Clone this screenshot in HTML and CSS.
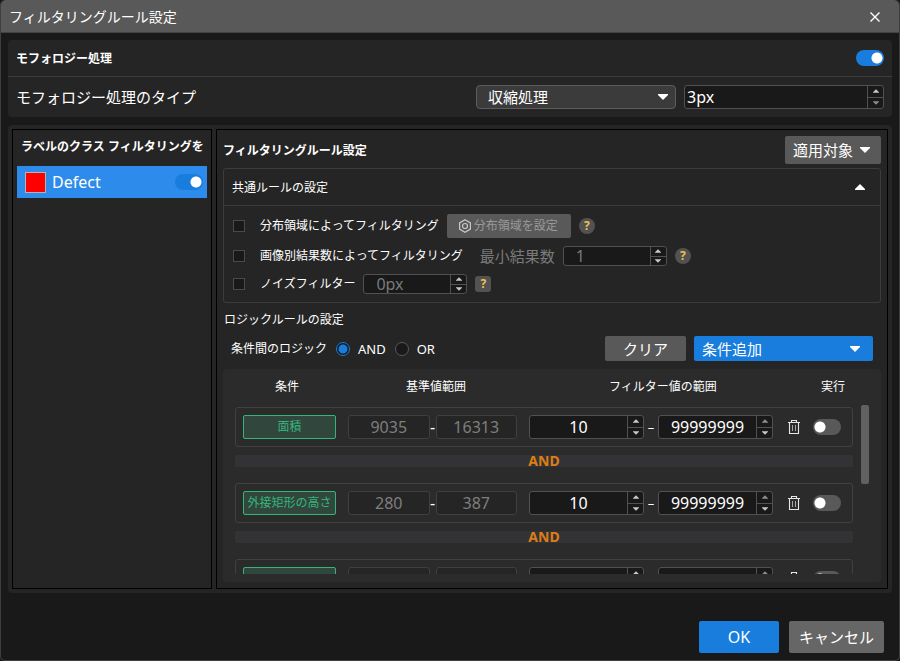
FILE: index.html
```html
<!DOCTYPE html>
<html lang="ja">
<head>
<meta charset="utf-8">
<meta name="viewport" content="width=device-width, initial-scale=1">
<title>フィルタリングルール設定</title>
<link rel="stylesheet" href="styles.css">
</head>
<body>
<svg class="sprite" aria-hidden="true">
  <symbol id="trash" viewBox="0 0 14 16">
    <path d="M1 3.500h12M4.500 3V1.500h5V3M2.500 4v10.500h9V4" fill="none" stroke="#e6e6e6" stroke-width="1.100"/>
    <path d="M5.500 6v6M8.500 6v6" stroke="#a8a8a8"/>
  </symbol>
  <symbol id="up" viewBox="0 0 10 6"><path d="M5 0l5 5v1H0V5z"/></symbol>
  <symbol id="down" viewBox="0 0 10 6"><path d="M0 0h10v1L5 6 0 1z"/></symbol>
</svg>
<main class="dialog">
  <header class="titlebar">
    <h1>フィルタリングルール設定</h1>
    <button class="close" aria-label="閉じる"><svg viewBox="0 0 10 10"><path d="M.5.5l9 9M9.500.5l-9 9"/></svg></button>
  </header>

  <section class="card morphology">
    <div class="morph-head">
      <label for="morph">モフォロジー処理</label>
      <input class="switch" id="morph" type="checkbox" role="switch" checked>
    </div>
    <div class="morph-body">
      <label for="type">モフォロジー処理のタイプ</label>
      <div class="select">
        <select id="type"><option>収縮処理</option></select>
        <svg class="caret"><use href="#down"/></svg>
      </div>
      <div class="spin morph-size dim-down">
        <input type="text" value="3px" aria-label="サイズ">
        <div class="steps"><button aria-label="増やす"><svg><use href="#up"/></svg></button><button aria-label="減らす"><svg><use href="#down"/></svg></button></div>
      </div>
    </div>
  </section>

  <section class="card workspace">
    <aside class="pane classes">
      <h2>ラベルのクラス フィルタリングを</h2>
      <div class="class-row">
        <span class="swatch"></span>
        <label for="defect">Defect</label>
        <input class="switch" id="defect" type="checkbox" role="switch" checked>
      </div>
    </aside>

    <div class="pane rules">
      <div class="rules-head">
        <h2>フィルタリングルール設定</h2>
        <button class="btn apply">適用対象 <svg class="caret"><use href="#down"/></svg></button>
      </div>

      <section class="common">
        <div class="common-head">
          <h3>共通ルールの設定</h3>
          <button class="fold" aria-label="折りたたむ"><svg class="caret"><use href="#up"/></svg></button>
        </div>
        <div class="common-body">
          <div class="option">
            <input class="check" id="region" type="checkbox"><label for="region">分布領域によってフィルタリング</label>
            <button class="btn region" disabled>
              <svg viewBox="0 0 14 14"><path d="M7 .8l5.400 3.100v6.200L7 13.200l-5.400-3.100V3.900z"/><circle cx="7" cy="7" r="2.500"/></svg>分布領域を設定</button>
            <button class="help" aria-label="ヘルプ">?</button>
          </div>
          <div class="option">
            <input class="check" id="count" type="checkbox"><label for="count">画像別結果数によってフィルタリング</label>
            <label class="min" for="min">最小結果数</label>
            <div class="spin small">
              <input id="min" type="text" value="1" disabled>
              <div class="steps"><button aria-label="増やす"><svg><use href="#up"/></svg></button><button aria-label="減らす"><svg><use href="#down"/></svg></button></div>
            </div>
            <button class="help" aria-label="ヘルプ">?</button>
          </div>
          <div class="option compact">
            <input class="check" id="noise" type="checkbox"><label for="noise">ノイズフィルター</label>
            <div class="spin small">
              <input type="text" value="0px" aria-label="ノイズサイズ" disabled>
              <div class="steps"><button aria-label="増やす"><svg><use href="#up"/></svg></button><button aria-label="減らす"><svg><use href="#down"/></svg></button></div>
            </div>
            <button class="help square" aria-label="ヘルプ">?</button>
          </div>
        </div>
      </section>

      <h3 class="logic-title">ロジックルールの設定</h3>
      <div class="logic">
        <span class="logic-label">条件間のロジック</span>
        <input type="radio" name="logic" id="and" checked><label for="and">AND</label>
        <input type="radio" name="logic" id="or"><label for="or">OR</label>
        <button class="btn clear">クリア</button>
        <button class="btn primary add">条件追加 <svg class="caret"><use href="#down"/></svg></button>
      </div>

      <section class="conditions">
        <div class="columns"><span>条件</span><span>基準値範囲</span><span>フィルター値の範囲</span><span>実行</span></div>
        <div class="viewport">
          <div class="list">
            <div class="condition">
              <button class="chip">面積</button>
              <div class="range ref"><input type="text" value="9035" aria-label="基準下限" disabled><span>-</span><input type="text" value="16313" aria-label="基準上限" disabled></div>
              <div class="range">
                <div class="spin"><input type="text" value="10" aria-label="下限"><div class="steps"><button aria-label="増やす"><svg><use href="#up"/></svg></button><button aria-label="減らす"><svg><use href="#down"/></svg></button></div></div>
                <span>–</span>
                <div class="spin dim-up"><input type="text" value="99999999" aria-label="上限"><div class="steps"><button aria-label="増やす"><svg><use href="#up"/></svg></button><button aria-label="減らす"><svg><use href="#down"/></svg></button></div></div>
              </div>
              <button class="trash" aria-label="削除"><svg><use href="#trash"/></svg></button>
              <input class="switch" type="checkbox" role="switch" aria-label="実行">
            </div>
            <div class="joiner">AND</div>
            <div class="condition">
              <button class="chip">外接矩形の高さ</button>
              <div class="range ref"><input type="text" value="280" aria-label="基準下限" disabled><span>-</span><input type="text" value="387" aria-label="基準上限" disabled></div>
              <div class="range">
                <div class="spin"><input type="text" value="10" aria-label="下限"><div class="steps"><button aria-label="増やす"><svg><use href="#up"/></svg></button><button aria-label="減らす"><svg><use href="#down"/></svg></button></div></div>
                <span>–</span>
                <div class="spin dim-up"><input type="text" value="99999999" aria-label="上限"><div class="steps"><button aria-label="増やす"><svg><use href="#up"/></svg></button><button aria-label="減らす"><svg><use href="#down"/></svg></button></div></div>
              </div>
              <button class="trash" aria-label="削除"><svg><use href="#trash"/></svg></button>
              <input class="switch" type="checkbox" role="switch" aria-label="実行">
            </div>
            <div class="joiner">AND</div>
            <div class="condition">
              <button class="chip" aria-label="条件"></button>
              <div class="range ref"><input type="text" aria-label="基準下限" disabled><span></span><input type="text" aria-label="基準上限" disabled></div>
              <div class="range">
                <div class="spin"><input type="text" aria-label="下限"><div class="steps"><button aria-label="増やす"><svg><use href="#up"/></svg></button><button aria-label="減らす"><svg><use href="#down"/></svg></button></div></div>
                <span></span>
                <div class="spin dim-up"><input type="text" aria-label="上限"><div class="steps"><button aria-label="増やす"><svg><use href="#up"/></svg></button><button aria-label="減らす"><svg><use href="#down"/></svg></button></div></div>
              </div>
              <button class="trash" aria-label="削除"><svg><use href="#trash"/></svg></button>
              <input class="switch" type="checkbox" role="switch" aria-label="実行">
            </div>
          </div>
          <div class="scrollbar" aria-hidden="true"></div>
        </div>
      </section>
    </div>
  </section>

  <footer class="actions">
    <button class="btn primary ok">OK</button>
    <button class="btn cancel">キャンセル</button>
  </footer>
</main>
</body>
</html>
```
FILE: styles.css
```css
* { box-sizing: border-box; }
body {
  margin: 0;
  background: #191919;
  color: #fff;
  font: 12px/16px "Noto Sans", "Noto Sans CJK JP", sans-serif;
}
h1, h2, h3 { margin: 0; font-size: 12px; line-height: 16px; font-weight: 400; white-space: nowrap; }
h2 { font-weight: 700; }
label { white-space: nowrap; }
button, input, select { font: inherit; color: inherit; margin: 0; padding: 0; border: 0; background: none; }
input[type="text"] { min-width: 0; }
svg { display: block; }
.sprite { position: absolute; width: 0; height: 0; }

.dialog {
  display: flex;
  flex-direction: column;
  height: 100vh;
  min-height: 560px;
  border: 1px solid #3f3f3f;
  border-top: 0;
  border-radius: 5px;
}
.titlebar {
  display: flex;
  align-items: center;
  justify-content: space-between;
  flex: none;
  height: 33px;
  padding: 2px 17px 0 8px;
  background: #595959;
  border-bottom: 1px solid #444;
  border-radius: 5px 5px 0 0;
}
.titlebar h1 { font-size: 14px; line-height: 20px; }
.close { padding: 2px; }
.close svg { width: 10px; height: 10px; stroke: #fff; stroke-width: 1.4; }

.card { margin: 7px 7px 0; background: #252525; border-radius: 4px; }
.morphology { flex: none; }
.morph-head {
  display: flex;
  align-items: center;
  justify-content: space-between;
  height: 37px;
  padding: 0 8px;
  border-bottom: 1px solid #3c3c3c;
  font-weight: 700;
}
.morph-head label, .rules-head h2, .common-head h3 { padding-top: 2px; }
.morph-body { display: flex; align-items: center; gap: 8px; height: 40px; padding: 0 8px; }
.morph-body label { flex: 1; font-size: 15px; }

.switch {
  appearance: none;
  flex: none;
  width: 28px;
  height: 16px;
  border-radius: 8px;
  background: radial-gradient(circle at 7px 8px, #fff 5px, transparent 6px), #595959;
}
.switch:checked { background: radial-gradient(circle at 21px 8px, #fff 5px, transparent 6px), #187ddd; }

.caret { width: 10px; height: 6px; fill: #fff; flex: none; }
.select {
  display: flex;
  align-items: center;
  width: 200px;
  height: 24px;
  padding-right: 7px;
  background: #3b3b3b;
  border: 1px solid #5c5c5c;
  border-radius: 4px;
}
.select select { appearance: none; flex: 1; height: 22px; padding-left: 11px; font-size: 15px; line-height: 22px; }

.spin {
  display: flex;
  flex: 1;
  min-width: 0;
  height: 24px;
  background: #191919;
  border: 1px solid #515151;
  border-radius: 3px;
}
.spin input { flex: 1; width: 0; text-align: center; font-size: 16px; }
.steps { display: flex; flex-direction: column; width: 16px; border-left: 1px solid #515151; }
.steps button { display: flex; flex: 1; align-items: center; justify-content: center; }
.steps button + button { border-top: 1px solid #515151; }
.steps svg { width: 6px; height: 4px; fill: #c8c8c8; }
.dim-up button:first-child svg, .dim-down button:last-child svg { fill: #8c8c8c; }
.morph-size { flex: none; width: 200px; }
.morph-size input { padding-left: 2px; text-align: left; }

.workspace { display: flex; flex: 1; min-height: 0; margin-top: 8px; padding: 4px; gap: 4px; }
.pane { border: 1px solid #000; min-width: 0; }
.classes { width: 200px; flex: none; padding: 9px 4px 0; }
.classes h2 { margin: 0 3px 11px 4px; overflow: hidden; }
.class-row { display: flex; align-items: center; gap: 6px; height: 32px; padding: 0 4px 0 8px; background: #2d8ceb; }
.class-row label { flex: 1; font-size: 16px; }
.swatch { width: 21px; height: 21px; background: #f00; border: 1px solid #b4b4b4; }

.rules { display: flex; flex-direction: column; flex: 1; padding: 6px 6px; }
.rules-head { display: flex; align-items: center; justify-content: space-between; flex: none; margin-bottom: 4px; }
.btn {
  display: flex;
  align-items: center;
  justify-content: center;
  height: 25px;
  background: #595959;
  border-radius: 2px;
  font-size: 15px;
  white-space: nowrap;
}
.primary { background: #187ddd; }
.apply { height: 28px; padding: 0 11px 0 8px; gap: 7px; }

.common { flex: none; border: 1px solid #3c3c3c; border-radius: 3px; }
.common-head {
  display: flex;
  align-items: center;
  justify-content: space-between;
  height: 37px;
  padding: 0 15px 0 8px;
  border-bottom: 1px solid #3c3c3c;
}
.common-body { padding: 5px 9px; }
.option { display: flex; align-items: center; height: 30px; gap: 8px; }
.option.compact { height: 26px; }
.check { appearance: none; flex: none; width: 12px; height: 12px; margin-right: 7px; background: #191919; border: 1px solid #4a4a4a; }
.region { height: 24px; padding: 0 13px 0 11px; gap: 2px; font-size: 12px; color: #999; }
.region svg { width: 14px; height: 14px; fill: none; stroke: #c8c8c8; stroke-width: 1.2; }
.min { margin-left: 9px; font-size: 15px; color: #7a7a7a; }
.small { flex: none; width: 104px; height: 20px; }
.small input { padding-left: 12px; text-align: left; color: #7a7a7a; }
.help { width: 16px; height: 16px; border-radius: 8px; background: #525252; color: #f0c04c; font-size: 12px; font-weight: 700; line-height: 16px; }
.square { border-radius: 3px; }

.logic-title { margin: 9px 0 8px 1px; }
.logic { display: flex; align-items: center; flex: none; padding: 0 8px; }
.logic label { margin: 0 9px 0 8px; font-size: 13px; }
.logic-label { margin-right: 9px; }
.logic input {
  appearance: none;
  flex: none;
  width: 14px;
  height: 14px;
  background: #191919;
  border: 1px solid #595959;
  border-radius: 50%;
}
.logic input:checked { background: radial-gradient(circle, #187ddd 4px, #191919 5px); border-color: #187ddd; }
.clear { width: 81px; margin-left: auto; margin-right: 8px; }
.add { width: 179px; padding: 0 13px 0 8px; justify-content: space-between; }

.conditions {
  display: flex;
  flex-direction: column;
  flex: 1;
  min-height: 0;
  margin-top: 8px;
  padding: 0 8px 8px 12px;
  background: #2b2b2b;
  border-radius: 4px;
}
.columns {
  display: grid;
  grid-template-columns: 104fr 194fr 260fr 80fr;
  flex: none;
  padding: 10px 0;
  text-align: center;
}
.viewport { display: flex; gap: 8px; flex: 1; min-height: 0; padding-right: 4px; }
.list { flex: 1; min-width: 0; padding-top: 2px; overflow: hidden; }
.scrollbar { width: 8px; height: 79px; background: #616161; border-radius: 2px; }
.condition {
  display: grid;
  grid-template-columns: 93fr 169fr 244fr 16px 28px;
  column-gap: 12px;
  align-items: center;
  height: 40px;
  padding: 0 11px 0 7px;
  border: 1px solid #414141;
  border-radius: 3px;
}
.chip {
  height: 24px;
  background: #31463d;
  border: 1px solid #35b57c;
  border-radius: 2px;
  color: #35b57c;
  white-space: nowrap;
}
.range { display: flex; align-items: center; min-width: 0; }
.range > span { width: 14px; text-align: center; font-size: 13px; }
.ref > span { width: 6px; font-size: 16px; }
.ref input {
  flex: 1;
  width: 0;
  height: 24px;
  background: #252525;
  border: 1px solid #3f3f3f;
  border-radius: 3px;
  color: #7e7e7e;
  font-size: 16px;
  text-align: center;
}
.trash { justify-self: end; }
.trash svg { width: 14px; height: 16px; }
.joiner {
  height: 12px;
  margin: 8px 0 16px;
  background: #333335;
  border-radius: 2px;
  color: #dc7d17;
  font-size: 14px;
  font-weight: 700;
  line-height: 12px;
  text-align: center;
}

.actions { display: flex; justify-content: flex-end; flex: none; gap: 10px; padding: 28px 15px 7px; }
.actions .btn { height: 32px; }
.ok { width: 80px; font-size: 16px; }
.cancel { width: 95px; background: #666; }
```
